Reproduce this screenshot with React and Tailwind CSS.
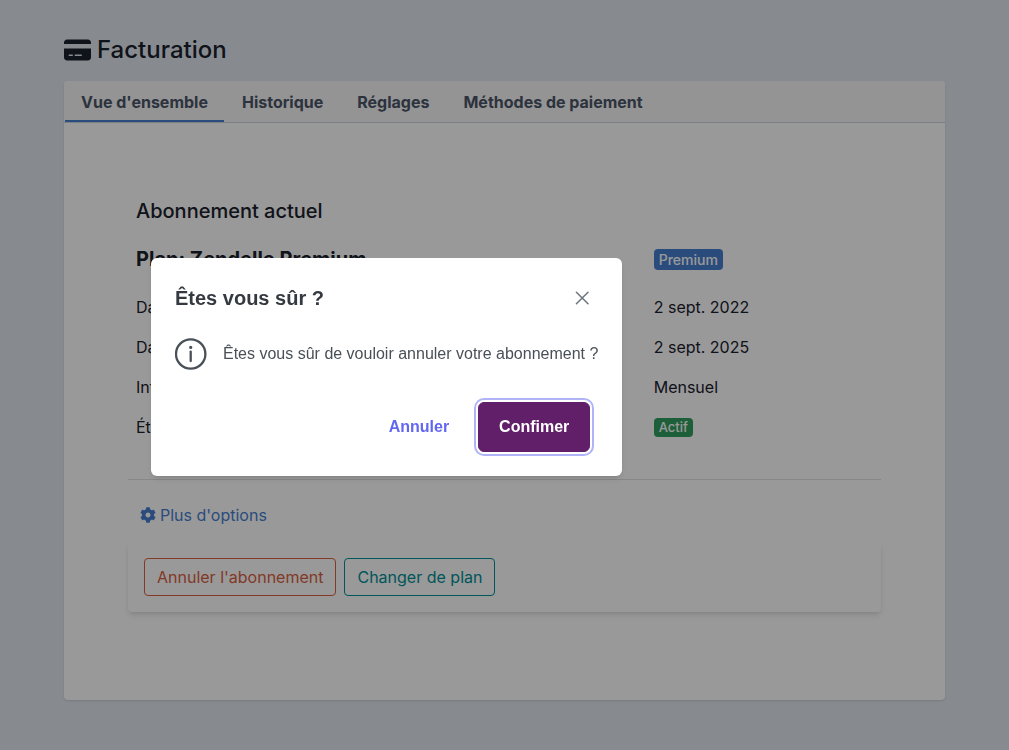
import { useState } from 'react';
import { FaCog } from 'react-icons/fa';
import { FaCreditCard } from 'react-icons/fa6';

const tabs = ["Vue d'ensemble", 'Historique', 'Réglages', 'Méthodes de paiement'];

const details = [
  { label: 'Date de début', value: '2 sept. 2022' },
  { label: 'Date de fin', value: '2 sept. 2025' },
  { label: 'Intervalle', value: 'Mensuel' },
];

function TabBar({ active, onChange }) {
  return (
    <div role="tablist" className="flex rounded-t border-b border-[#cbd5e0] bg-[#f7f7f7]">
      {tabs.map((tab, i) => (
        <button
          key={tab}
          type="button"
          role="tab"
          aria-selected={i === active}
          onClick={() => onChange(i)}
          className={`mx-px border-b-2 px-4 pt-[9px] pb-[6px] font-bold text-[#4a5568] ${
            i === active ? 'border-[#467fd0]' : 'border-transparent'
          }`}
        >
          {tab}
        </button>
      ))}
    </div>
  );
}

function Subscription() {
  return (
    <section>
      <h2 className="px-2 text-xl font-medium">Abonnement actuel</h2>
      <table className="mt-2 w-full text-left">
        <tbody>
          <tr>
            <th className="w-11/16 px-2 pt-3 pb-[14px] text-xl font-bold">Plan: Zendelle Premium</th>
            <td className="px-2 pt-3 pb-[14px]">
              <span className="block w-fit rounded bg-[#467fd0] px-[5px] text-sm leading-[21px] font-medium text-white">
                Premium
              </span>
            </td>
          </tr>
          {details.map((row) => (
            <tr key={row.label}>
              <th className="p-2 font-normal">{row.label}</th>
              <td className="p-2">{row.value}</td>
            </tr>
          ))}
          <tr>
            <th className="p-2 font-normal">État</th>
            <td className="p-2">
              <span className="block w-fit rounded bg-[#2f9e5f] px-[5px] text-[13px] leading-[19px] font-medium text-white">
                Actif
              </span>
            </td>
          </tr>
        </tbody>
      </table>
    </section>
  );
}

function Options() {
  return (
    <section>
      <a href="#options" className="ml-3 flex w-fit items-center gap-1 text-[#467fd0]">
        <FaCog className="size-4" />
        Plus d'options
      </a>
      <div className="mt-[15px] flex gap-2 rounded p-4 shadow-md">
        <button type="button" className="rounded border border-[#d9603f] px-3 py-[6px] text-[#d9603f]">
          Annuler l'abonnement
        </button>
        <button type="button" className="rounded border border-[#008f96] px-3 py-[6px] text-[#008f96]">
          Changer de plan
        </button>
      </div>
    </section>
  );
}

function ConfirmDialog({ onClose }) {
  return (
    <div className="fixed inset-0 bg-black/40">
      <div
        role="dialog"
        aria-modal="true"
        aria-labelledby="confirm-title"
        className="absolute top-[258px] left-[151px] rounded-md bg-white p-6 font-['Liberation_Sans',Arial,sans-serif] shadow-md"
      >
        <div className="flex items-center justify-between">
          <h3 id="confirm-title" className="text-xl font-bold text-[#343a40]">
            Êtes vous sûr ?
          </h3>
          <button
            type="button"
            aria-label="Fermer"
            onClick={onClose}
            className="flex size-8 items-center justify-center rounded-full text-[#6c757d]"
          >
            <svg viewBox="0 0 16 16" className="size-4" fill="none" stroke="currentColor" strokeWidth="1.5" strokeLinecap="round">
              <path d="M2.4 2.2 14 13.8M14 2.2 2.4 13.8" />
            </svg>
          </button>
        </div>
        <div className="mt-6 flex items-center gap-4 text-[#495057]">
          <svg viewBox="0 0 32 32" className="size-8" fill="none" stroke="currentColor">
            <circle cx="15.7" cy="16" r="14.7" strokeWidth="2.3" />
            <path d="M15.7 13.6v9.4" strokeWidth="2.3" strokeLinecap="round" />
            <circle cx="15.7" cy="9.4" r="1.6" fill="currentColor" stroke="none" />
          </svg>
          <p>Êtes vous sûr de vouloir annuler votre abonnement ?</p>
        </div>
        <div className="mt-8 flex justify-end gap-2 pr-2">
          <button
            type="button"
            onClick={onClose}
            className="rounded-md border border-transparent px-5 py-3 font-bold text-[#6366f1]"
          >
            Annuler
          </button>
          <button
            type="button"
            onClick={onClose}
            className="rounded-md border border-[#611f69] bg-[#611f69] px-5 py-3 font-bold text-white ring-2 ring-[#b1b3f8] ring-offset-2"
          >
            Confimer
          </button>
        </div>
      </div>
    </div>
  );
}

export default function App() {
  const [active, setActive] = useState(0);
  const [open, setOpen] = useState(true);

  return (
    <div className="min-h-screen bg-[#e2e8f0] px-16 pt-8 pb-[50px] font-[Inter,sans-serif] text-[#1a202c]">
      <h1 className="flex items-center gap-[6px] text-2xl leading-9 font-medium">
        <FaCreditCard className="h-6 w-[27px]" />
        Facturation
      </h1>
      <main className="mt-[13px] rounded bg-white shadow">
        <TabBar active={active} onChange={setActive} />
        <div className="px-16 pt-[74px] pb-[88px]">
          <Subscription />
          <hr className="mt-8 mb-[23px] border-[#e2e2e2]" />
          <Options />
        </div>
      </main>
      {open && <ConfirmDialog onClose={() => setOpen(false)} />}
    </div>
  );
}
